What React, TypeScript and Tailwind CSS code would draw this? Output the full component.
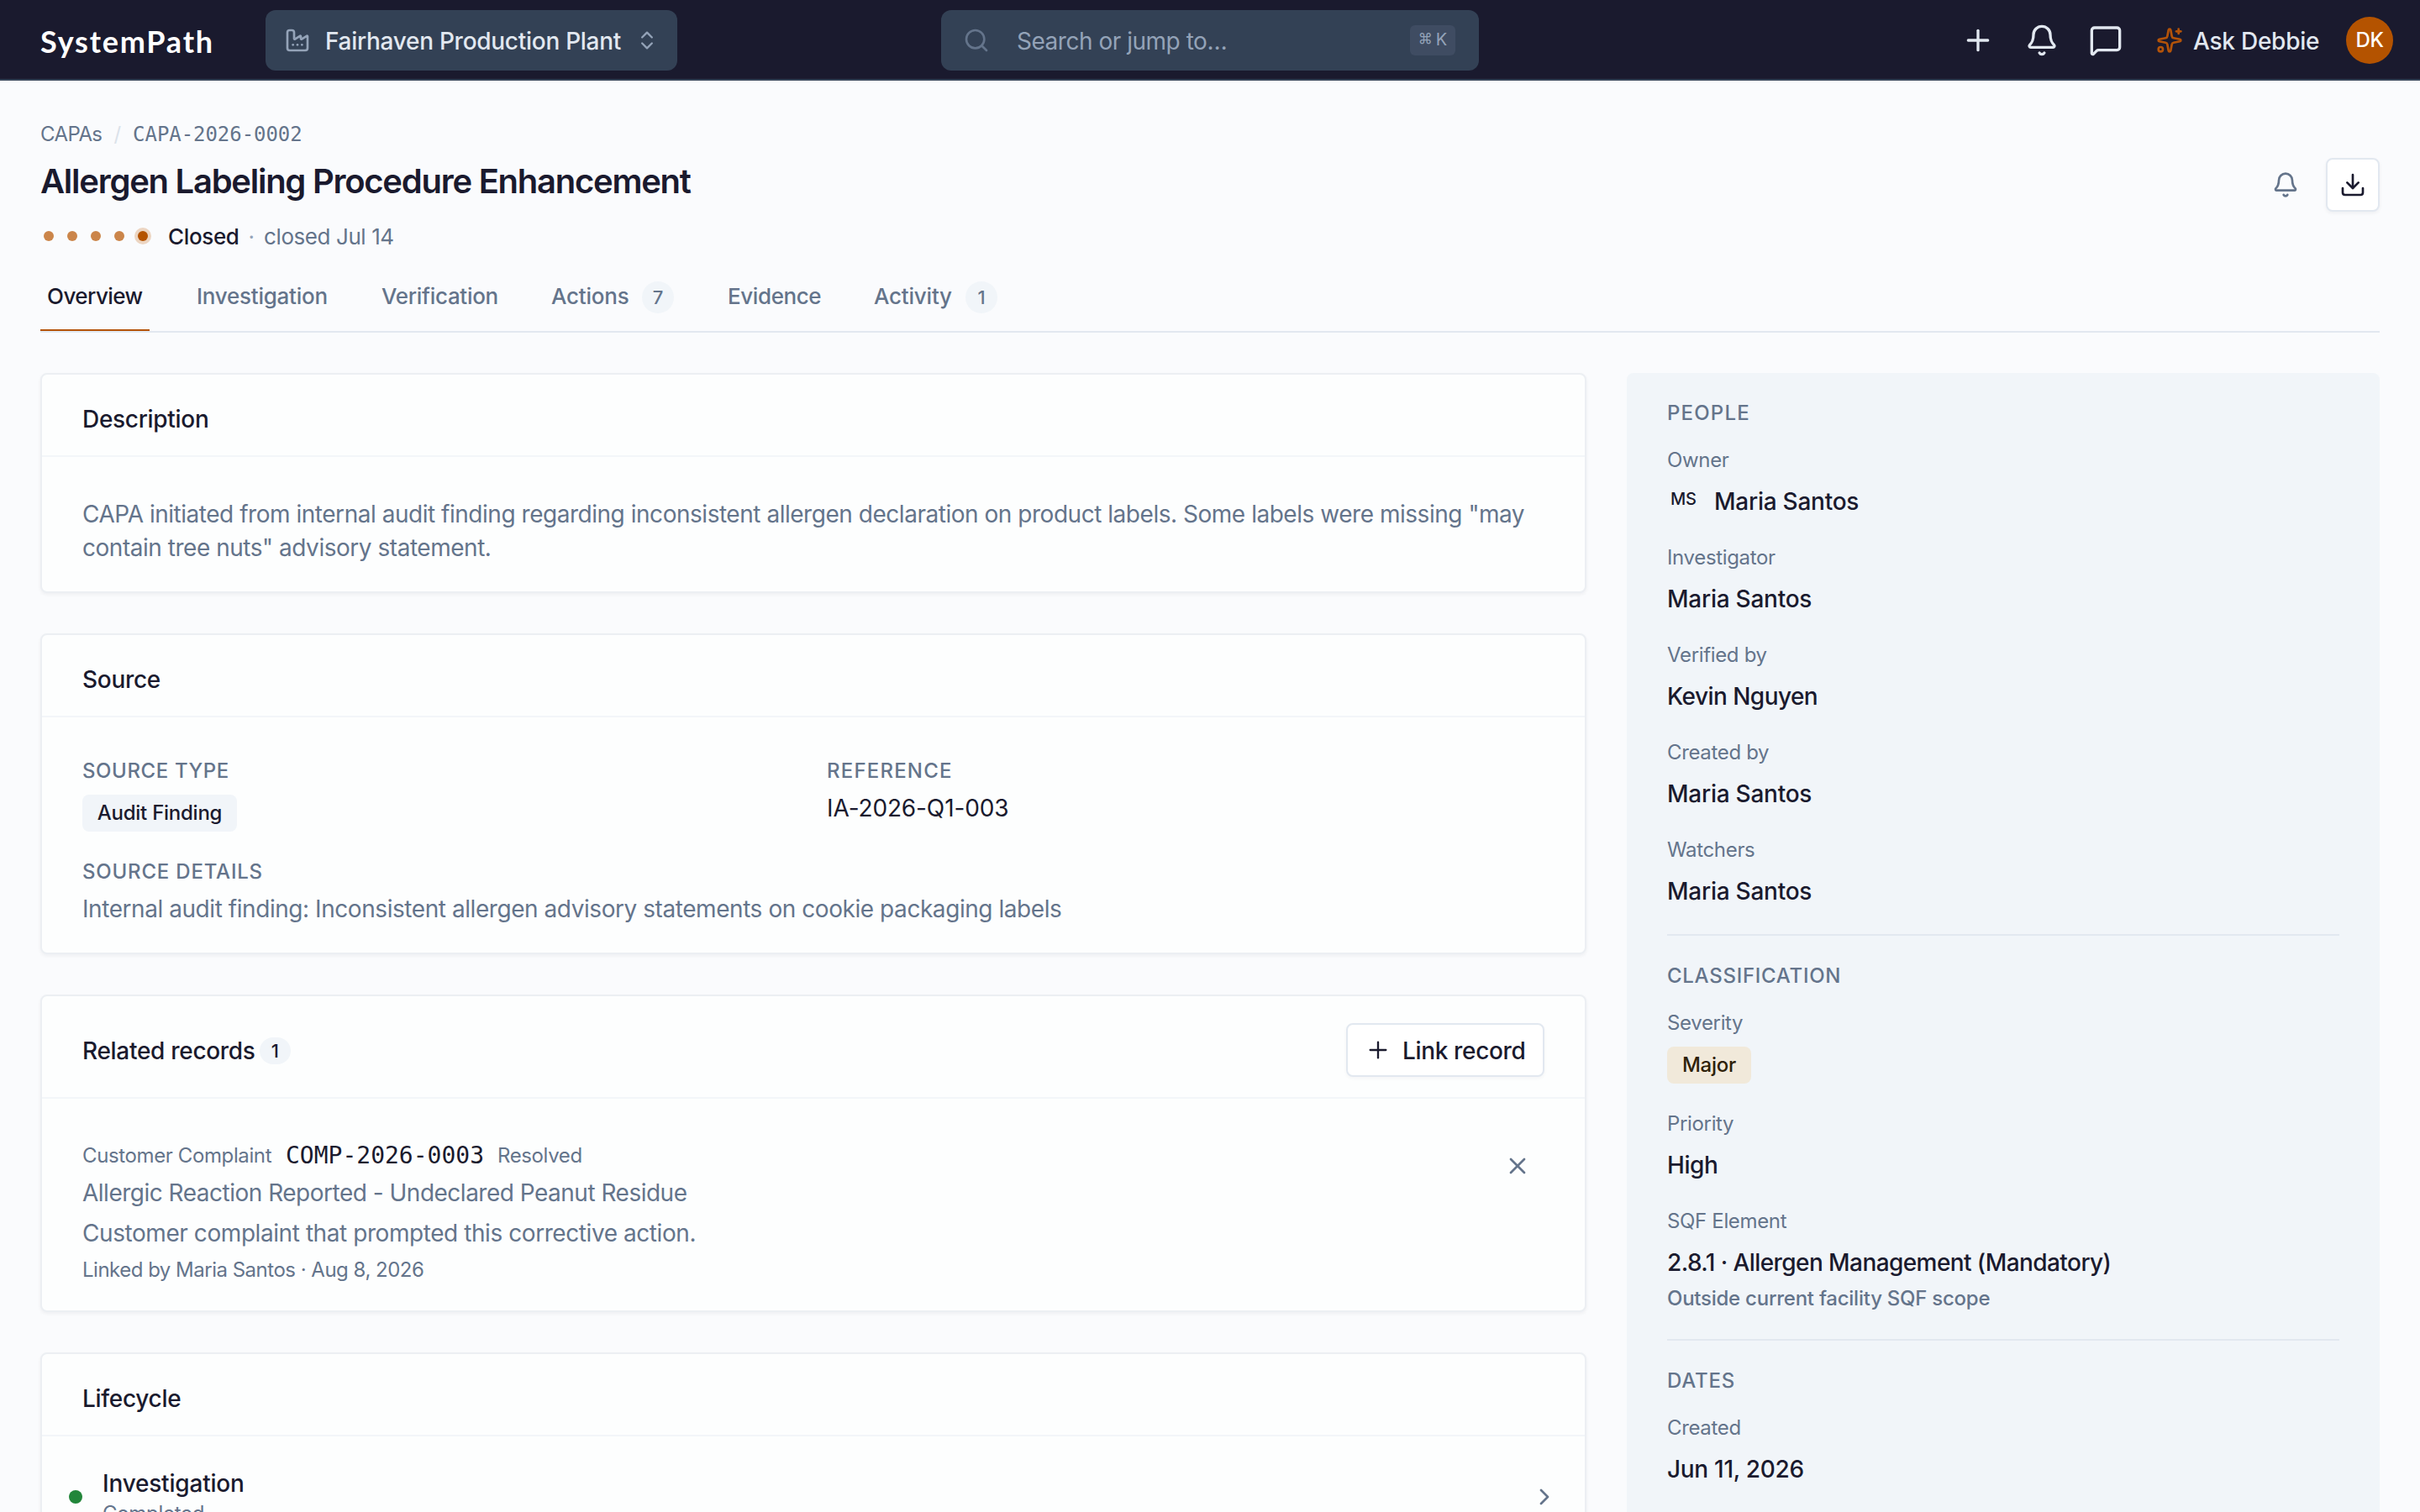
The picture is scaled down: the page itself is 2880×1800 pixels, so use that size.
import type { ReactNode } from "react"
import {
  Bell, ChevronRight, ChevronsUpDown, Download, Factory, MessageSquare, Plus, Search, Sparkles, X,
} from "lucide-react"

const TABS = [
  { label: "Overview", width: "w-[130px]", spacing: "tracking-[-0.55px]" },
  { label: "Investigation", width: "w-[172px]", spacing: "tracking-[-0.25px]" },
  { label: "Verification", width: "w-[154px]", spacing: "tracking-[-0.3px]" },
  { label: "Actions", width: "w-[162px]", spacing: "tracking-[-0.2px]", count: 7 },
  { label: "Evidence", width: "w-[126px]", spacing: "tracking-[-0.4px]" },
  { label: "Activity", width: "w-[163px]", spacing: "tracking-[-0.2px]", count: 1 },
]

function Card({ title, action, children }: { title: ReactNode; action?: ReactNode; children: ReactNode }) {
  return (
    <section className="rounded-lg border-2 border-[#eceff3] bg-[#fdfefe] shadow-[0_2px_4px_rgba(15,23,42,0.05)]">
      <header className={`flex items-center justify-between border-b-2 border-[#f3f6f9] px-12 pt-2 ${action ? "h-[122px]" : "h-[98px]"}`}>
        <h2 className="flex items-center pt-0.5 text-[28px] font-medium leading-10 tracking-[-0.3px]">{title}</h2>
        {action}
      </header>
      {children}
    </section>
  )
}

function Caps({ spacing = "tracking-[0.8px]", children }: { spacing?: string; children: ReactNode }) {
  return <div className={`text-[24px] font-medium leading-8 text-[#64748b] ${spacing}`}>{children}</div>
}

function Field({ label, children }: { label: string; children: ReactNode }) {
  return (
    <div className="pt-6">
      <div className="text-[24px] leading-8 tracking-[-0.34px] text-[#64748b]">{label}</div>
      {children}
    </div>
  )
}

function Value({ spacing = "tracking-[-0.25px]", children }: { spacing?: string; children: ReactNode }) {
  return <div className={`mb-[3px] mt-[9px] flex h-12 items-center text-[28px] font-medium leading-10 ${spacing}`}>{children}</div>
}

function TopBar() {
  return (
    <header className="flex h-24 items-center border-b-2 border-[#334155] bg-[#1a1a2e] pt-0.5 text-[#e2e8f0]">
      <div className="w-[268px] pl-12 pt-0.5 font-[Lato] text-[36px] font-bold tracking-[1.8px] text-white">SystemPath</div>
      <button className="ml-12 flex h-[72px] w-[490px] items-center rounded-xl bg-[#334155] pl-[22px] pr-[22px]">
        <Factory className="size-8 shrink-0 text-[#94a3b8]" strokeWidth={2} />
        <span className="ml-[17px] flex-1 whitespace-nowrap pt-px text-left text-[28px] font-medium tracking-[-0.28px]">Fairhaven Production Plant</span>
        <ChevronsUpDown className="size-7 shrink-0 text-[#94a3b8]" />
      </button>
      <div className="ml-[314px] flex h-[72px] w-[640px] items-center rounded-xl bg-[#334155] pl-[26px] pr-7">
        <Search className="size-8 text-[#64748b]" />
        <span className="ml-8 flex-1 pt-px text-[28px] tracking-[-0.48px] text-[#94a3b8]">Search or jump to…</span>
        <kbd className="flex h-9 w-[54px] items-center justify-center gap-1 rounded-md bg-[#3f4c62] pb-[3px] font-['Inter'] text-[20px] text-[#94a3b8]">
          <span className="text-[17px]">⌘</span>K
        </kbd>
      </div>
      <div className="ml-auto flex items-center pr-8">
        <Plus className="size-10" />
        <Bell className="ml-9 size-10" />
        <MessageSquare className="ml-9 size-10" />
        <Sparkles className="ml-10 size-8 text-[#b45309]" />
        <span className="ml-3 w-[182px] whitespace-nowrap pt-px text-[28px] font-medium tracking-[-0.25px]">Ask Debbie</span>
        <div className="flex size-14 items-center justify-center rounded-full bg-[#b45300] text-[24px] font-medium tracking-[-0.4px] text-white">DK</div>
      </div>
    </header>
  )
}

function PageHeader() {
  return (
    <div className="flex items-start justify-between px-12 pt-11">
      <div>
        <nav className="flex h-10 items-center text-[24px] text-[#64748b]">
          <span className="tracking-[-0.6px]">CAPAs</span>
          <span className="ml-3.5 mr-3.5 text-[#dbe2ea]">/</span>
          <span className="font-['DejaVu_Sans_Mono'] tracking-[-0.05px]">CAPA-2026-0002</span>
        </nav>
        <h1 className="mt-3 text-[40px] font-semibold leading-[48px] tracking-[-1.26px]">Allergen Labeling Procedure Enhancement</h1>
        <div className="mt-[23px] flex h-9 items-center text-[26px]">
          <div className="flex items-center gap-4 pl-1">
            {[0, 1, 2, 3].map(i => <span key={i} className="size-3 rounded-full bg-[#cb854a]" />)}
            <span className="size-3 rounded-full bg-[#b45300] ring-4 ring-[#ecd5c2]" />
          </div>
          <span className="ml-6 font-medium tracking-[-0.35px]">Closed</span>
          <span className="mx-[11px] text-[#94a3b8]">·</span>
          <span className="tracking-[-0.42px] text-[#64748b]">closed Jul 14</span>
        </div>
      </div>
      <div className="mt-12 flex items-center">
        <Bell className="mr-8 size-8 text-[#64748b]" />
        <button className="flex size-16 items-center justify-center rounded-lg border-2 border-[#e2e8f0] bg-white shadow-[0_2px_4px_rgba(15,23,42,0.05)]">
          <Download className="size-8" />
        </button>
      </div>
    </div>
  )
}

function Tabs() {
  return (
    <div className="mx-12 mt-4 flex h-[81px] gap-12 border-b-2 border-[#e2e8f0]">
      {TABS.map((tab, i) => (
        <div
          key={tab.label}
          className={`flex h-[79px] items-start whitespace-nowrap px-2 pt-[20px] text-[26px] font-medium leading-9 ${tab.width} ${
            i === 0 ? "border-b-2 border-[#b45309]" : "text-[#64748b]"
          }`}
        >
          <span className={tab.spacing}>{tab.label}</span>
          {tab.count && (
            <span className="ml-auto flex h-[38px] w-[38px] items-center justify-center rounded-full bg-[#f1f5f9] text-[22px]">{tab.count}</span>
          )}
        </div>
      ))}
    </div>
  )
}

function Sidebar() {
  return (
    <aside className="h-[1500px] w-[896px] rounded-lg bg-[#f1f5f9] px-12 pt-8">
      <Caps spacing="tracking-[1.2px]">PEOPLE</Caps>
      <Field label="Owner">
        <Value>
          <span className="mb-1.5 ml-1 w-[52px] text-[20px]">MS</span>Maria Santos
        </Value>
      </Field>
      <Field label="Investigator"><Value>Maria Santos</Value></Field>
      <Field label="Verified by"><Value spacing="tracking-[-0.55px]">Kevin Nguyen</Value></Field>
      <Field label="Created by"><Value>Maria Santos</Value></Field>
      <Field label="Watchers"><Value>Maria Santos</Value></Field>

      <div className="mt-[27px] border-t-2 border-[#e2e8f0] pt-8">
        <Caps spacing="tracking-[0.72px]">CLASSIFICATION</Caps>
        <Field label="Severity">
          <div className="mt-3 flex h-11 w-[100px] items-center justify-center rounded-lg bg-[#f1e9da] text-[24px] font-medium tracking-[-0.25px] text-[#2e2108]">Major</div>
        </Field>
        <div className="pt-2">
          <Field label="Priority"><Value spacing="tracking-[-0.4px]">High</Value></Field>
        </div>
        <Field label="SQF Element">
          <Value spacing="tracking-[-0.58px]">2.8.1 · Allergen Management (Mandatory)</Value>
        </Field>
        <div className="mt-px text-[24px] font-medium leading-8 tracking-[-0.25px] text-[#64748b]">Outside current facility SQF scope</div>
      </div>

      <div className="mt-8 border-t-2 border-[#e2e8f0] pt-8">
        <Caps>DATES</Caps>
        <Field label="Created"><Value spacing="tracking-[-0.3px]">Jun 11, 2026</Value></Field>
      </div>
    </aside>
  )
}

export default function App() {
  return (
    <div className="h-[1800px] w-[2880px] overflow-hidden bg-[#fafbfd] font-['Inter',sans-serif] text-[#1a1a2e]">
      <TopBar />
      <PageHeader />
      <Tabs />
      <main className="mt-12 flex items-start justify-between px-12">
        <div className="flex w-[1840px] flex-col gap-12">
          <Card title="Description">
            <p className="h-[160px] px-12 pt-12 text-[28px] leading-10 tracking-[-0.47px] text-[#64748b]">
              CAPA initiated from internal audit finding regarding inconsistent allergen declaration on product labels. Some labels were missing "may
              contain tree nuts" advisory statement.
            </p>
          </Card>

          <Card title="Source">
            <div className="h-[280px] px-12 pt-12">
              <div className="flex">
                <div className="w-[886px]">
                  <Caps spacing="tracking-[0.6px]">SOURCE TYPE</Caps>
                  <span className="mt-3 flex h-11 w-[184px] items-center justify-center rounded-lg bg-[#f1f5f9] text-[24px] font-medium tracking-[-0.25px]">Audit Finding</span>
                </div>
                <div>
                  <Caps spacing="tracking-[1.2px]">REFERENCE</Caps>
                  <div className="mt-2 text-[28px] leading-10 tracking-[-0.13px]">IA-2026-Q1-003</div>
                </div>
              </div>
              <div className="mt-8">
                <Caps>SOURCE DETAILS</Caps>
                <p className="mt-2 text-[28px] leading-10 tracking-[-0.44px] text-[#64748b]">
                  Internal audit finding: Inconsistent allergen advisory statements on cookie packaging labels
                </p>
              </div>
            </div>
          </Card>

          <Card
            title={<>Related records<span className="ml-[5px] flex h-8 w-[37px] items-center justify-center rounded-full bg-[#f1f5f9] text-[22px]">1</span></>}
            action={
              <button className="flex h-16 w-[236px] items-center rounded-lg border-2 border-[#e2e8f0] bg-white pl-5 text-[28px] font-medium shadow-[0_2px_4px_rgba(15,23,42,0.04)]">
                <Plus className="size-8" strokeWidth={1.75} />
                <span className="ml-[13px] whitespace-nowrap pt-px tracking-[-0.35px]">Link record</span>
              </button>
            }
          >
            <div className="flex h-[252px] justify-between px-12 pt-12 text-[#64748b]">
              <div>
                <div className="flex h-10 items-center text-[24px] tracking-[-0.38px]">
                  <span className="w-[242px]">Customer Complaint</span>
                  <span className="w-[252px] font-['DejaVu_Sans_Mono'] text-[28px] tracking-[0] text-[#1a1a2e]">COMP-2026-0003</span>
                  <span>Resolved</span>
                </div>
                <p className="mt-1 text-[28px] leading-10 tracking-[-0.5px]">Allergic Reaction Reported - Undeclared Peanut Residue</p>
                <p className="mt-2 text-[28px] leading-10 tracking-[-0.43px]">Customer complaint that prompted this corrective action.</p>
                <p className="mt-2 text-[24px] leading-8 tracking-[-0.5px]">Linked by Maria Santos · Aug 8, 2026</p>
              </div>
              <X className="mr-4 mt-4 size-8" />
            </div>
          </Card>

          <Card title="Lifecycle">
            <div className="flex h-[200px] items-start pl-8 pr-8 pt-9">
              <span className="mt-7 size-4 rounded-full bg-[#22863a]" />
              <div className="ml-6 flex-1">
                <div className="text-[28px] font-medium leading-10 tracking-[-0.2px]">Investigation</div>
                <div className="text-[24px] leading-8 tracking-[-0.3px] text-[#64748b]">Completed</div>
              </div>
              <ChevronRight className="mt-5 size-8 text-[#64748b]" />
            </div>
          </Card>
        </div>
        <Sidebar />
      </main>
    </div>
  )
}
